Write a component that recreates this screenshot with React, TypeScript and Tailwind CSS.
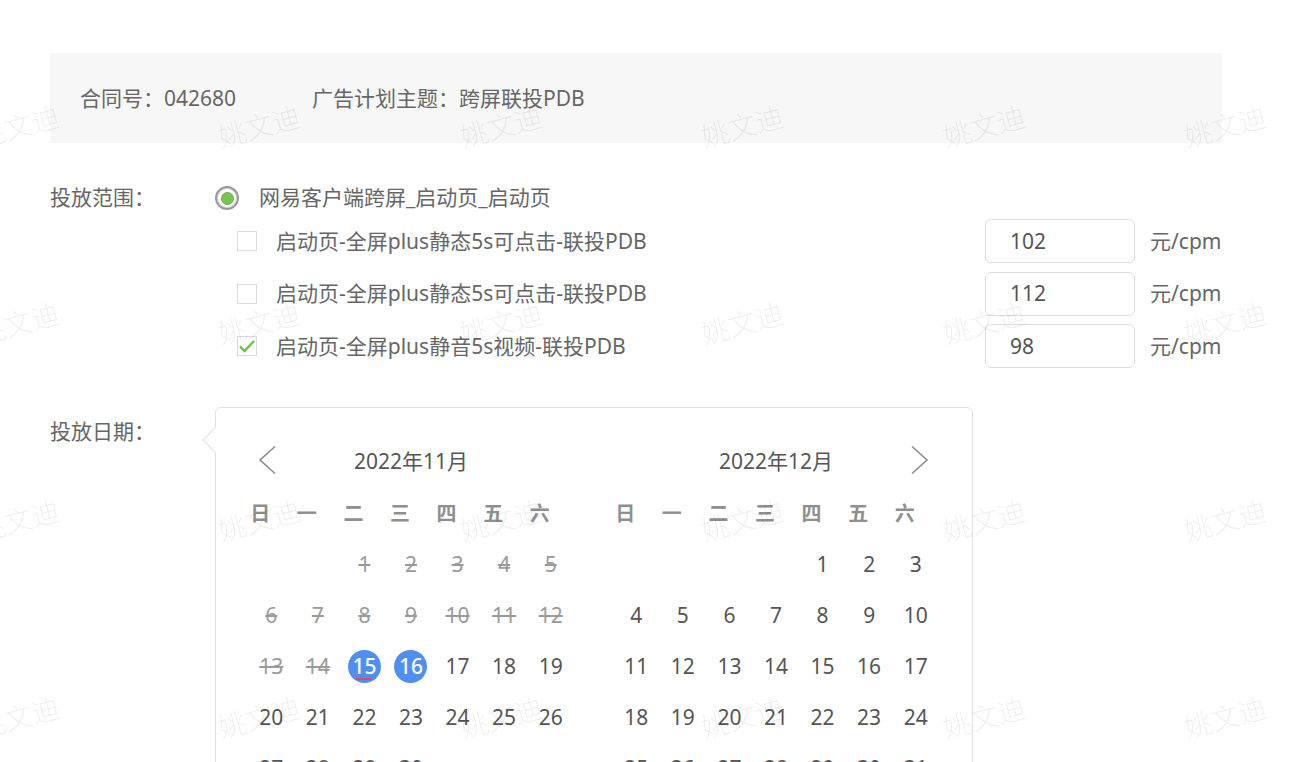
import React from "react";

const items = [
  { name: "启动页-全屏plus静态5s可点击-联投PDB", price: "102", checked: false },
  { name: "启动页-全屏plus静态5s可点击-联投PDB", price: "112", checked: false },
  { name: "启动页-全屏plus静音5s视频-联投PDB", price: "98", checked: true },
];

const weekdays = ["日", "一", "二", "三", "四", "五", "六"];

function Chevron({ dir }: { dir: "left" | "right" }) {
  return (
    <svg width="20" height="30" viewBox="0 0 20 30" fill="none">
      {dir === "left" ? (
        <polyline points="18,1.5 3,15 18,28.5" stroke="#8a8a8a" strokeWidth="1.6" />
      ) : (
        <polyline points="2,1.5 17,15 2,28.5" stroke="#8a8a8a" strokeWidth="1.6" />
      )}
    </svg>
  );
}

type MonthProps = {
  title: string;
  offset: number;
  days: number;
  disabledUntil: number;
  selected: number[];
  today: number;
  nav: "left" | "right";
};

function Month({ title, offset, days, disabledUntil, selected, today, nav }: MonthProps) {
  const cells: (number | null)[] = [];
  for (let i = 0; i < offset; i++) cells.push(null);
  for (let d = 1; d <= days; d++) cells.push(d);
  return (
    <div className="w-[326px] flex flex-col">
      <div className="grid grid-cols-[1fr_auto_1fr] items-center h-[40px]">
        <div className="flex justify-start pl-[9px]">{nav === "left" && <Chevron dir="left" />}</div>
        <div className="text-[21px] text-[#555] leading-none pt-[2px]">{title}</div>
        <div className="flex justify-end pr-[9px]">{nav === "right" && <Chevron dir="right" />}</div>
      </div>
      <div className="grid grid-cols-7 h-[40px] items-center mt-[14px] -ml-[11px] mr-[11px]">
        {weekdays.map((w) => (
          <div key={w} className="text-center font-bold text-[20px] text-[#8f8f8f]">
            {w}
          </div>
        ))}
      </div>
      <div className="grid grid-cols-7 auto-rows-[51px] mt-[5px]">
        {cells.map((d, i) => {
          if (d === null) return <div key={i} />;
          const isSel = selected.includes(d);
          const isDis = d <= disabledUntil;
          return (
            <div key={i} className="flex items-center justify-center">
              {isSel ? (
                <span className="relative w-[33px] h-[33px] rounded-full bg-[#4f8ff1] text-white flex items-center justify-center text-[21px] font-medium">
                  {d}
                  {d === today && (
                    <span className="absolute bottom-[3px] left-1/2 -translate-x-1/2 w-[16px] h-[2px] bg-[#e5436f]" />
                  )}
                </span>
              ) : (
                <span
                  className={
                    isDis
                      ? "text-[21px] text-[#9a9a9a] line-through"
                      : "text-[21px] text-[#555]"
                  }
                >
                  {d}
                </span>
              )}
            </div>
          );
        })}
      </div>
    </div>
  );
}

function Watermarks() {
  const xs = [18, 259, 501, 742, 984, 1225];
  const ys = [126, 323, 520, 717];
  const marks: { x: number; y: number }[] = [];
  ys.forEach((y) => xs.forEach((x) => marks.push({ x, y })));
  return (
    <div className="absolute inset-0 pointer-events-none overflow-hidden">
      {marks.map((m, i) => (
        <div
          key={i}
          className="absolute text-[28px] leading-none font-light text-black/[0.08] whitespace-nowrap"
          style={{ left: m.x, top: m.y, transform: "translate(-50%, -50%) rotate(-15deg)" }}
        >
          姚文迪
        </div>
      ))}
    </div>
  );
}

export default function App() {
  return (
    <div className="relative w-full h-[762px] overflow-hidden bg-white font-['Noto_Sans','Noto_Sans_CJK_SC',sans-serif] text-[#666]">
      <div className="ml-[50px] w-[1172px] pt-[53px]">
        <div className="h-[90px] bg-[#f7f7f7] flex items-center pl-[30px] pt-[2px] text-[21px] text-[#666]">
          <span className="w-[232px]">合同号：042680</span>
          <span>广告计划主题：跨屏联投PDB</span>
        </div>

        <div className="mt-[35px] flex items-center h-[40px]">
          <div className="w-[165px] text-[21px]">投放范围：</div>
          <span className="w-[24px] h-[24px] rounded-full border-2 border-[#9a9a9a] bg-white flex items-center justify-center shadow-[inset_0_0_0_1px_#d0d0d0]">
            <span className="w-[13px] h-[13px] rounded-full bg-[#78c550] border border-[#6ab043]" />
          </span>
          <span className="ml-[20px] text-[21px]">网易客户端跨屏_启动页_启动页</span>
        </div>

        <div className="mt-[1px] flex flex-col gap-[8.5px]">
          {items.map((it, i) => (
            <div key={i} className="flex items-center h-[44px]">
              <div className="flex-1 flex items-center pl-[187px]">
                <span className="w-[20px] h-[20px] border border-[#d6dbe5] bg-white flex items-center justify-center">
                  {it.checked && (
                    <svg width="18" height="14" viewBox="0 0 18 14" fill="none">
                      <polyline points="2,7.5 6.5,12 16,2" stroke="#6cbf45" strokeWidth="2.4" />
                    </svg>
                  )}
                </span>
                <span className="ml-[19px] text-[21px] pt-[1px]">{it.name}</span>
              </div>
              <div className="w-[150px] h-[44px] border border-[#dcdcdc] rounded-[6px] flex items-center pl-[24px] pt-[1px] text-[21px] text-[#555]">
                {it.price}
              </div>
              <span className="ml-[15px] w-[72px] text-[21px] whitespace-nowrap pt-[1px]">元/cpm</span>
            </div>
          ))}
        </div>

        <div className="mt-[39px] flex items-start">
          <div className="w-[165px] pt-[9px] text-[21px] leading-[30px]">投放日期：</div>
          <div className="relative w-[758px] border border-[#e0e0e0] rounded-[6px] bg-white pt-[32px] pl-[32px] pr-[33px] pb-[20px] flex gap-[39px]">
            <span className="absolute -left-[10px] top-[23px] w-[18px] h-[18px] rotate-45 bg-white border-l border-b border-[#e0e0e0]" />
            <Month title="2022年11月" offset={2} days={30} disabledUntil={14} selected={[15, 16]} today={15} nav="left" />
            <Month title="2022年12月" offset={4} days={31} disabledUntil={0} selected={[]} today={0} nav="right" />
          </div>
        </div>
      </div>
      <Watermarks />
    </div>
  );
}
